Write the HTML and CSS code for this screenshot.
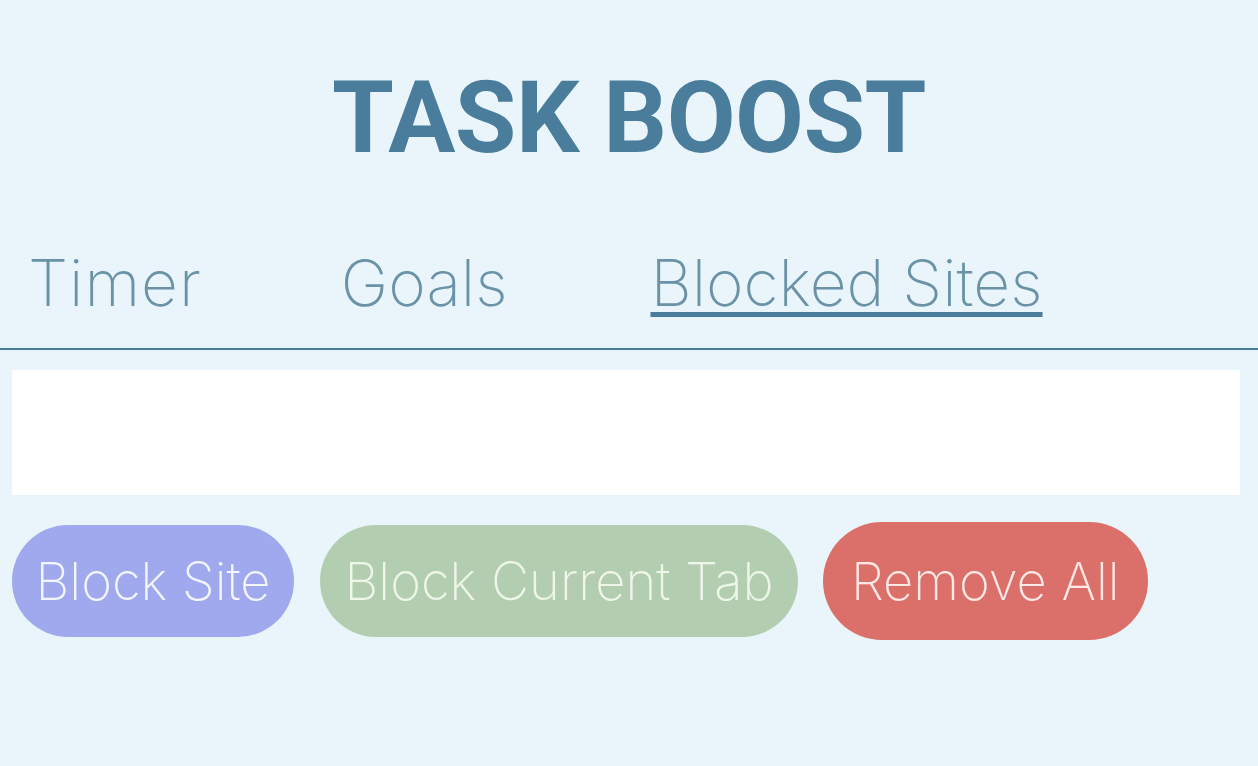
FILE: index.html
```html
<!DOCTYPE html>
<html>
<head>
<meta charset="utf-8">
<link rel="stylesheet" href="styles.css">
</head>
<body>
<h1 class="title">TASK BOOST</h1>
<nav class="tabs">
  <a class="tab">Timer</a>
  <a class="tab">Goals</a>
  <a class="tab active">Blocked Sites</a>
</nav>
<input class="site-input" type="text">
<div class="actions">
  <button class="btn btn-block">Block Site</button>
  <button class="btn btn-current">Block Current Tab</button>
  <button class="btn btn-remove">Remove All</button>
</div>
</body>
</html>
```
FILE: styles.css
```css
html, body {
  margin: 0;
  padding: 0;
  background: #eaf5fb;
}
body {
  font-family: "Liberation Sans", Arial, sans-serif;
}
.title {
  margin: 68px 0 0;
  font-family: Roboto, "Liberation Sans", sans-serif;
  font-size: 100px;
  line-height: 100px;
  font-weight: 700;
  color: #4a7d9b;
  text-align: center;
  letter-spacing: -0.5px;
}
.tabs {
  display: flex;
  gap: 143px;
  margin-top: 79px;
  padding: 0 0 29px 28px;
  border-bottom: 2px solid #4a7d9b;
}
.tab {
  font-family: Inter, "Open Sans", sans-serif;
  font-weight: 200;
  font-size: 64px;
  line-height: 72px;
  color: #6a93a8;
  text-decoration: none;
}
.tab:first-child {
  letter-spacing: 1px;
  margin-right: -4px;
}
.tab.active {
  text-decoration: underline;
  text-decoration-color: #4a7d9b;
  text-decoration-thickness: 5px;
  text-underline-offset: 6px;
}
.site-input {
  display: block;
  box-sizing: border-box;
  width: calc(100% - 30px);
  height: 125px;
  margin: 20px 0 0 12px;
  border: none;
  background: #ffffff;
  outline: none;
}
.actions {
  display: flex;
  align-items: center;
  gap: 25px;
  margin-top: 27px;
  padding-left: 12px;
}
.btn {
  height: 112px;
  border: none;
  border-radius: 56px;
  padding: 0 23.5px;
  font-family: Inter, "Open Sans", sans-serif;
  font-weight: 200;
  font-size: 52.5px;
  color: #f4f6ff;
}
.btn-block { background: #a0a8ee; }
.btn-current { background: #b3cdb0; color: #eef6ea; margin-left: 1px; padding: 0 24.5px; }
.btn-remove { background: #db6f6a; color: #ffe9e6; height: 118px; border-radius: 59px; padding: 0 28px; }
```
